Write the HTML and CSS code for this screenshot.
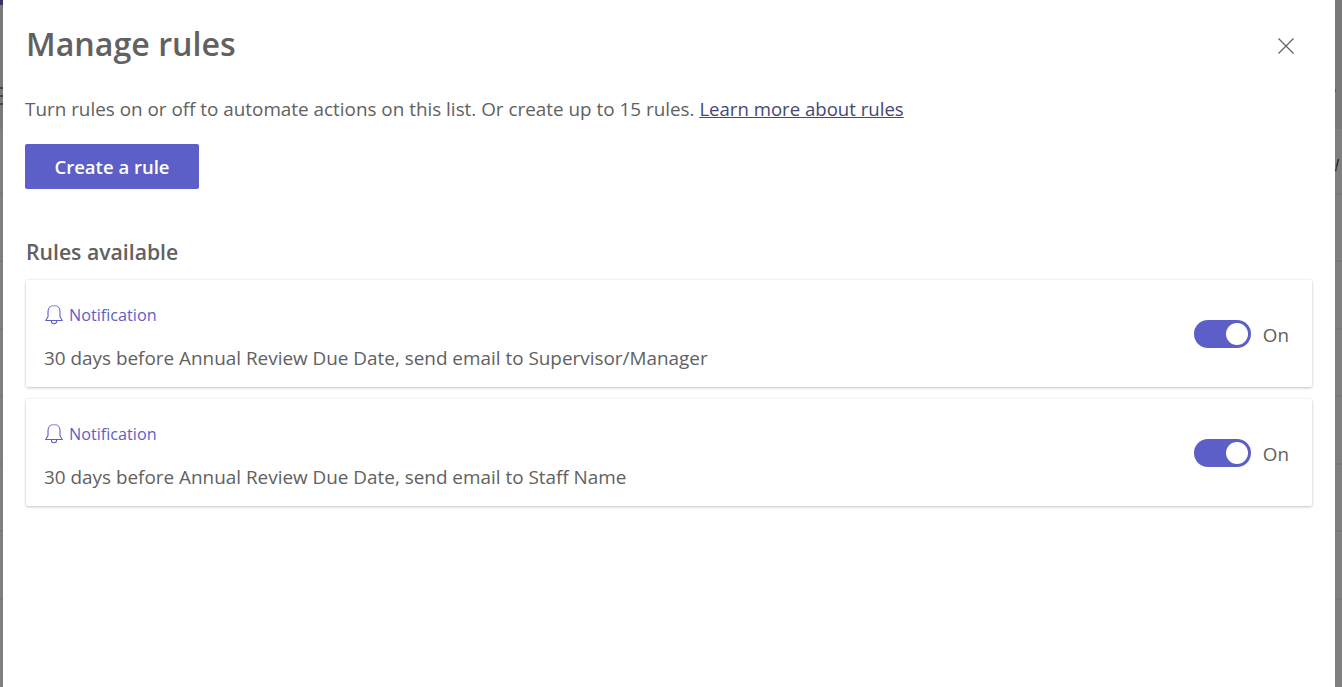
FILE: index.html
```html
<!DOCTYPE html>
<html lang="en">
<head>
    <meta charset="UTF-8">
    <title>Manage rules</title>
    <link rel="stylesheet" href="styles.css">
</head>
<body>
    <!-- Dimmed page behind the dialog -->
    <div class="backdrop">
        <div class="backdrop-head">
            <div class="appbar"></div>
            <div class="hamburger"><span></span><span></span><span></span></div>
            <span class="speck"></span>
            <svg class="glyph" width="5" height="14" viewBox="0 0 5 14"><path d="M0.500 13L3.500 1" stroke="#26303f" stroke-width="1.500" fill="none"/><path d="M0 6.500L1 11" stroke="#8a6a48" stroke-width="1.200" fill="none"/></svg>
        </div>
    </div>

    <div class="dialog">
        <div class="dialog-header">
            <h1>Manage rules</h1>
            <button class="close" aria-label="Close">
                <svg width="18" height="18" viewBox="0 0 18 18"><path d="M1.500 1.500l15 15M16.500 1.500l-15 15" stroke="#616161" stroke-width="1.200" fill="none"/></svg>
            </button>
        </div>
        <p class="intro">Turn rules on or off to automate actions on this list. Or create up to 15 rules. <a href="#">Learn more about rules</a></p>
        <button class="primary">Create a rule</button>
        <h2>Rules available</h2>

        <div class="rule">
            <div class="rule-text">
                <div class="rule-type">
                    <svg class="bell" width="20" height="22" viewBox="0 0 20 22"><path d="M10 1.500c-3.800 0-6 2.800-6 6v5.300l-2.300 3.700h16.600L16 12.800V7.500c0-3.200-2.200-6-6-6zM7.300 16.500c0 2 1.200 3.300 2.700 3.300s2.700-1.300 2.700-3.300" fill="none" stroke="#5b5fc7" stroke-width="1.100" stroke-linejoin="round"/></svg>
                    <span>Notification</span>
                </div>
                <div class="rule-desc">30 days before Annual Review Due Date, send email to Supervisor/Manager</div>
            </div>
            <div class="toggle-wrap"><span class="toggle"></span><span class="toggle-label">On</span></div>
        </div>

        <div class="rule">
            <div class="rule-text">
                <div class="rule-type">
                    <svg class="bell" width="20" height="22" viewBox="0 0 20 22"><path d="M10 1.500c-3.800 0-6 2.800-6 6v5.300l-2.300 3.700h16.600L16 12.800V7.500c0-3.200-2.200-6-6-6zM7.300 16.500c0 2 1.200 3.300 2.700 3.300s2.700-1.300 2.700-3.300" fill="none" stroke="#5b5fc7" stroke-width="1.100" stroke-linejoin="round"/></svg>
                    <span>Notification</span>
                </div>
                <div class="rule-desc">30 days before Annual Review Due Date, send email to Staff Name</div>
            </div>
            <div class="toggle-wrap"><span class="toggle"></span><span class="toggle-label">On</span></div>
        </div>
    </div>
</body>
</html>
```

FILE: styles.css
```css
html, body {
    height: 100%;
}

body {
    margin: 0;
    overflow: hidden;
    font-family: "Open Sans", "Noto Sans", Arial, sans-serif;
    color: #616161;
    background-color: #808080;
}

.backdrop {
    position: absolute;
    inset: 0;
    background-image: repeating-linear-gradient(to bottom, #808080 0, #808080 66.500px, #727272 66.500px, #727272 67.500px);
    background-position: 0 59.500px;
}

.backdrop-head {
    position: relative;
    height: 129px;
    background-color: #797979;
}

.appbar {
    width: 3px;
    height: 5px;
    background-color: #33345f;
}

.hamburger {
    position: absolute;
    top: 87px;
    left: 0;
    display: flex;
    flex-direction: column;
    gap: 6px;
}

.hamburger span {
    display: block;
    width: 3px;
    height: 2px;
    background-color: #444;
}

.speck {
    position: absolute;
    top: 89px;
    right: 6px;
    width: 1px;
    height: 3px;
    background-color: #3f5f80;
}

.glyph {
    position: absolute;
    top: 158px;
    right: 2px;
}

.dialog {
    position: absolute;
    top: 0;
    bottom: 0;
    left: 3px;
    right: 7px;
    background-color: #fff;
    padding: 0 22px;
}

.dialog-header {
    display: flex;
    justify-content: space-between;
    align-items: center;
    height: 90px;
}

h1 {
    margin: 0 0 4px;
    font-size: 32.200px;
    font-weight: 600;
    padding-left: 1px;
}

.close {
    border: none;
    background: none;
    padding: 0;
    margin: 2px 18px 0 0;
    display: flex;
}

.intro {
    margin: 7px 0 0;
    font-size: 18.880px;
    line-height: 24px;
}

.intro a {
    color: #464775;
    font-size: 18.600px;
}

.primary {
    display: block;
    margin-top: 23px;
    width: 174px;
    height: 45px;
    background-color: #5b5fc7;
    color: #fff;
    border: none;
    border-radius: 2px;
    font-family: inherit;
    font-size: 18.500px;
    font-weight: 600;
}

h2 {
    margin: 48px 0 13px;
    font-size: 21.200px;
    line-height: 30px;
    font-weight: 600;
    padding-left: 1px;
}

.rule {
    display: flex;
    justify-content: space-between;
    align-items: center;
    box-sizing: border-box;
    width: 1286px;
    height: 107px;
    margin: 0 0 12px 1px;
    padding: 0 23px 0 18px;
    border-radius: 2px;
    box-shadow: 0 1px 3px rgba(0, 0, 0, 0.22), 0 0 2px rgba(0, 0, 0, 0.08);
}

.rule-text {
    padding-top: 6px;
}

.rule-type {
    display: flex;
    align-items: center;
    gap: 5px;
    font-size: 16.200px;
    color: #5b5fc7;
}

.rule-desc {
    margin-top: 20px;
    font-size: 18.900px;
    line-height: 24px;
}

.toggle-wrap {
    display: flex;
    align-items: center;
    gap: 12px;
    font-size: 18.800px;
}

.toggle-label {
    margin-top: 2px;
}

.toggle {
    display: block;
    box-sizing: border-box;
    width: 57px;
    height: 28px;
    padding: 3px;
    border-radius: 14px;
    background-color: #5b5fc7;
    position: relative;
}

.toggle::after {
    content: "";
    position: absolute;
    right: 3px;
    top: 3px;
    width: 22px;
    height: 22px;
    border-radius: 50%;
    background-color: #fff;
}
```
